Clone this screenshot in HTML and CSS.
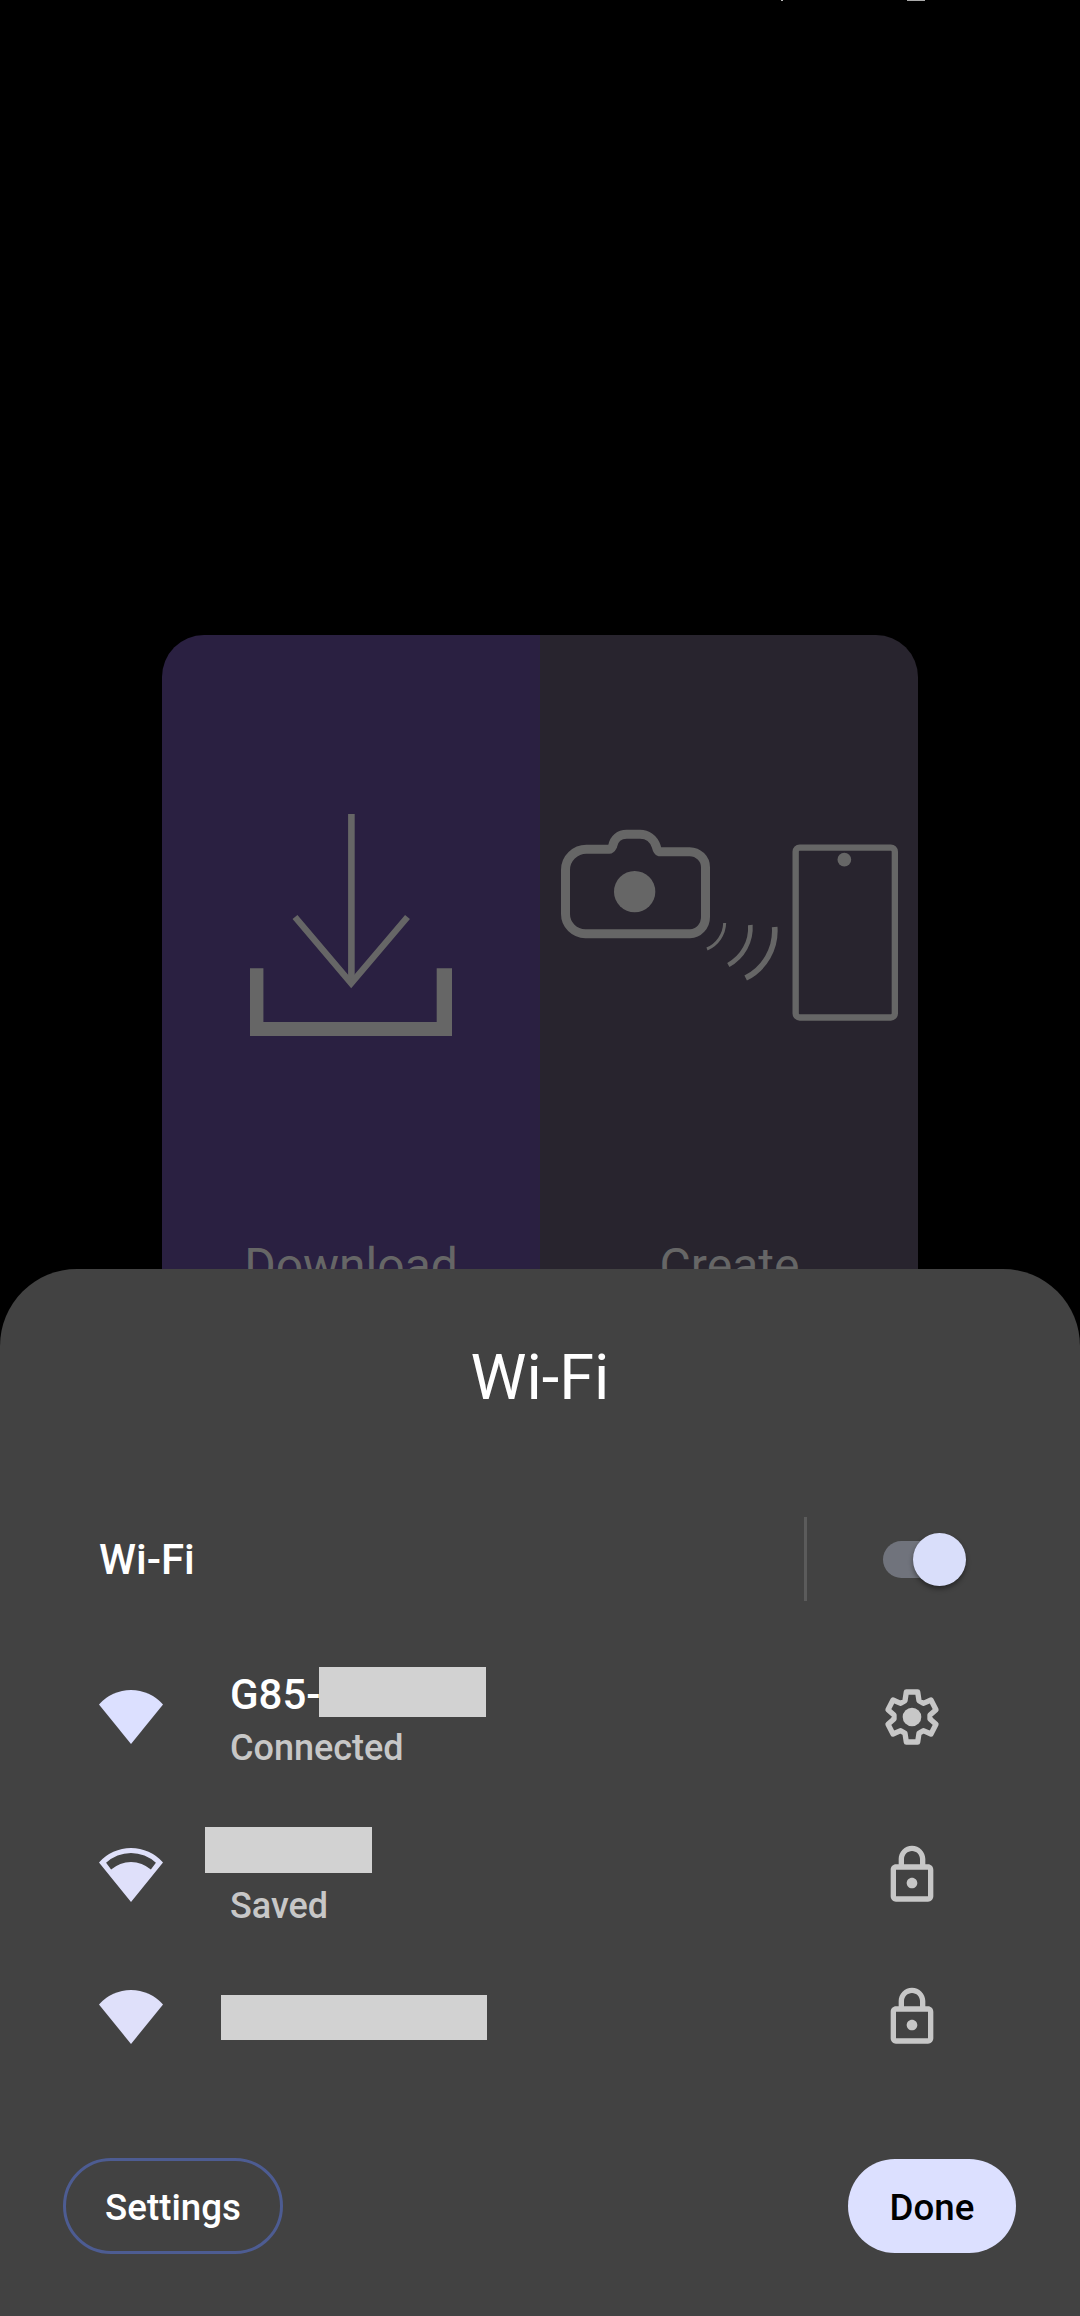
FILE: index.html
```html
<!DOCTYPE html>
<html lang="en">
<head>
<meta charset="utf-8">
<title>Wi-Fi</title>
<link rel="stylesheet" href="styles.css">
</head>
<body>
<div class="screen">
  <div class="status"><i class="status-dot"></i><i class="status-bar"></i></div>
  <main class="card">
    <section class="tile tile-download">
      <svg class="download-icon" viewBox="0 0 202 222" fill="none" stroke="#666">
        <path d="M101.4 0V168" stroke-width="6.6"/>
        <path d="M45 103 101.2 169.2 157.500 103" stroke-width="6.4"/>
        <path d="M0 154.300H13.400V208H186.700V154.300H202V222H0Z" fill="#666" stroke="none"/>
      </svg>
      <span class="tile-label">Download</span>
    </section>
    <section class="tile tile-create">
      <svg class="create-icon" viewBox="90 615 1020 600" fill="none" stroke="#666">
        <path d="M238 688H170A63 62 0 0 0 106.500 750V882A60 59 0 0 0 166 941H480A47 50 0 0 0 526.500 891V742A48 47 0 0 0 479 695H388Q382 693 379 680C371 655 351 643 330 643H290C268 643 252 656 248 678Q243 688 238 688Z" stroke-width="27"/>
        <circle cx="314" cy="815" r="62" fill="#666" stroke="none"/>
        <path d="M584 909A88 88 0 0 1 531 987" stroke-width="9"/>
        <path d="M661 915A127 127 0 0 1 595 1035" stroke-width="14"/>
        <path d="M734 921A158 158 0 0 1 647 1074" stroke-width="17"/>
        <rect x="797" y="683" width="297.500" height="509.500" rx="12" stroke-width="19"/>
        <circle cx="943" cy="719" r="20.500" fill="#666" stroke="none"/>
      </svg>
      <span class="tile-label">Create</span>
    </section>
  </main>

  <div class="sheet">
    <h1 class="title">Wi-Fi</h1>
    <div class="toggle-row">
      <span class="toggle-label">Wi-Fi</span>
      <span class="divider"></span>
      <span class="switch"><span class="thumb"></span></span>
    </div>
    <div class="network">
      <svg class="signal" viewBox="0 0 190 160"><path d="M0 43A126.400 126.400 0 0 1 190 43L95 160Z" fill="#dce0ff"/></svg>
      <div class="info">
        <div class="name">G85-<span class="mask mask-a"></span></div>
        <div class="state">Connected</div>
      </div>
      <svg class="action" viewBox="0 0 192 192" fill="none" stroke="#c7c7c7" stroke-width="16" stroke-linejoin="round">
        <path d="M79 21H113L117 47 130 55 153 45 168 74 150 90V102L168 118 153 147 130 137 117 145 113 171H79L75 145 62 137 39 147 24 118 42 102V90L24 74 39 45 62 55 75 47Z"/>
        <circle cx="96" cy="96" r="28" fill="#c7c7c7" stroke="none"/>
      </svg>
    </div>
    <div class="network">
      <svg class="signal" viewBox="0 0 190 160"><path fill-rule="evenodd" d="M0 43A126.400 126.400 0 0 1 190 43L95 160ZM21 44 36 64A88 88 0 0 1 154 64L169 44A108 108 0 0 0 21 44Z" fill="#dfe0fa"/></svg>
      <div class="info">
        <div class="name"><span class="mask mask-b"></span></div>
        <div class="state">Saved</div>
      </div>
      <svg class="action" viewBox="0 0 24 24" fill="#c7c7c7"><path d="M18 8h-1V6c0-2.760-2.240-5-5-5S7 3.240 7 6v2H6c-1.100 0-2 .9-2 2v10c0 1.100.9 2 2 2h12c1.100 0 2-.9 2-2V10c0-1.100-.9-2-2-2zM9 6c0-1.660 1.340-3 3-3s3 1.340 3 3v2H9V6zm9 14H6V10h12v10zm-6-3c1.100 0 2-.9 2-2s-.9-2-2-2-2 .9-2 2 .9 2 2 2z"/></svg>
    </div>
    <div class="network network-short">
      <svg class="signal" viewBox="0 0 190 160"><path d="M0 43A126.400 126.400 0 0 1 190 43L95 160Z" fill="#dfe0fa"/></svg>
      <div class="info"><span class="mask mask-c"></span></div>
      <svg class="action" viewBox="0 0 24 24" fill="#c7c7c7"><path d="M18 8h-1V6c0-2.760-2.240-5-5-5S7 3.240 7 6v2H6c-1.100 0-2 .9-2 2v10c0 1.100.9 2 2 2h12c1.100 0 2-.9 2-2V10c0-1.100-.9-2-2-2zM9 6c0-1.660 1.340-3 3-3s3 1.340 3 3v2H9V6zm9 14H6V10h12v10zm-6-3c1.100 0 2-.9 2-2s-.9-2-2-2-2 .9-2 2 .9 2 2 2z"/></svg>
    </div>
    <div class="buttons">
      <button class="btn btn-settings">Settings</button>
      <button class="btn btn-done">Done</button>
    </div>
  </div>
</div>
</body>
</html>
```
FILE: styles.css
```css
* { box-sizing: border-box; }
body { margin: 0; background: #000; font-family: Roboto, sans-serif; }
.screen { position: relative; width: 1080px; height: 2316px; overflow: hidden; background: #000; }

.status { display: flex; height: 1px; padding-left: 781px; }
.status-dot { width: 2px; background: #bbb; }
.status-bar { width: 18px; margin-left: 124px; background: #aaa; }

.card { display: flex; width: 756px; height: 760px; margin: 634px auto 0; border-radius: 42px; overflow: hidden; }
.tile { display: flex; flex: 1; flex-direction: column; align-items: center; }
.tile-download { background: #2a2041; }
.tile-create { background: #28242e; }
.download-icon { width: 202px; height: 222px; margin-top: 179px; }
.create-icon { width: 340px; height: 200px; margin: 190px 0 0 2px; }
.tile-label { margin-top: 202px; font-size: 48px; line-height: 56px; color: #666; }
.tile-create .tile-label { margin: 213px 0 0 1px; }

.sheet { position: absolute; left: 0; right: 0; bottom: 0; height: 1047px; background: #424242; border-radius: 77px 77px 0 0; color: #fff; }
.title { margin: 71px 0 0; height: 76px; font-size: 63px; font-weight: 400; line-height: 76px; text-align: center; }
.toggle-row { display: flex; align-items: center; height: 84px; margin-top: 101px; padding-left: 99px; }
.toggle-label { flex: 1; padding-top: 2px; font-size: 42px; font-weight: 500; line-height: 50px; }
.divider { width: 3px; height: 84px; background: #5b5b5b; }
.switch { display: flex; align-items: center; justify-content: flex-end; width: 83px; height: 37px; margin: 0 114px 0 76px; border-radius: 19px; background: linear-gradient(90deg, #70737c 65%, transparent 65%); }
.thumb { width: 53px; height: 53px; border-radius: 50%; background: #d9defa; box-shadow: 0 3px 5px rgba(0, 0, 0, .4); }

.network { display: flex; align-items: center; height: 158px; padding: 0 136px 0 99px; }
.toggle-row + .network { margin-top: 37px; }
.network-short { height: 126px; }
.signal { width: 64px; height: 54px; }
.info { flex: 1; padding: 6px 0 0 67px; }
.network-short .info { padding-top: 1px; }
.name { display: flex; height: 50px; margin-bottom: 6px; font-size: 42px; font-weight: 500; line-height: 50px; }
.state { font-size: 36px; font-weight: 500; line-height: 44px; color: #c7c7c7; }
.mask { display: block; background: #d2d2d2; }
.mask-a { width: 167px; height: 50px; margin: -3px 0 0 -2px; }
.mask-b { width: 167px; height: 46px; margin: -1px 0 0 -25px; }
.mask-c { width: 266px; height: 45px; margin-left: -9px; }
.action { width: 64px; height: 64px; }

.buttons { display: flex; justify-content: space-between; align-items: center; height: 96px; margin-top: 78px; padding: 0 64px 0 63px; }
.btn { padding: 3px 0 0; border: 0; border-radius: 48px; font: 500 36.7px/44px Roboto, sans-serif; }
.btn-settings { width: 220px; height: 96px; border: 3px solid #4d5c92; background: none; color: #fff; }
.btn-done { width: 168px; height: 94px; background: #dce0ff; color: #000; }
```
